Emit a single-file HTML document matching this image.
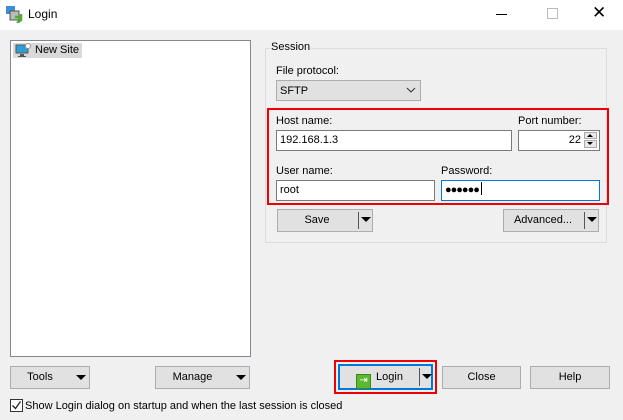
<!DOCTYPE html><html><head><style>
body{margin:0;width:623px;height:420px;background:#f0f0f0;font:11px "Liberation Sans",sans-serif;color:#000;position:relative;overflow:hidden}
.a{position:absolute}
.btn{position:absolute;background:#e1e1e1;border:1px solid #adadad;box-sizing:border-box;text-align:center;line-height:21px}
.inp{position:absolute;background:#fff;border:1px solid #7a7a7a;box-sizing:border-box;line-height:19px;padding-left:3px}
.tri{position:absolute;width:0;height:0;border-left:5px solid transparent;border-right:5px solid transparent;border-top:5px solid #000}
.sep{position:absolute;width:1px;background:#555}
</style></head><body>
<div class="a" style="left:0;top:0;width:623px;height:30px;background:#fff"></div>
<svg class="a" style="left:6px;top:6px" width="17" height="17"><rect x="0" y="0" width="9" height="8" fill="#3a8fd8"/><rect x="4" y="5" width="9" height="9" fill="#bbb" stroke="#555"/><path d="M9 11 l6 0 l0 -3 l0 6 l-4 3" fill="none" stroke="#4caf30" stroke-width="2.5"/></svg>
<div class="a" style="left:28px;top:7px;font-size:12px">Login</div>
<div class="a" style="left:496px;top:14px;width:11px;height:1px;background:#000"></div>
<div class="a" style="left:547px;top:8px;width:9px;height:9px;border:1px solid #bbb"></div>
<div class="a" style="left:592px;top:3px;font-size:17px;color:#000">✕</div>

<div class="a" style="left:10px;top:40px;width:241px;height:317px;background:#fff;border:1px solid #828790;box-sizing:border-box"></div>
<div class="a" style="left:13px;top:43px;width:69px;height:15px;background:#d9d9d9"></div>
<svg class="a" style="left:15px;top:43px" width="16" height="15"><rect x="1" y="2" width="12" height="8" fill="#2a9fd8" stroke="#555"/><rect x="5" y="11" width="4" height="2" fill="#555"/><rect x="3" y="13" width="8" height="1" fill="#555"/><circle cx="13" cy="3" r="2.5" fill="#fff" stroke="#999"/></svg>
<div class="a" style="left:35px;top:44px">New Site</div>

<div class="a" style="left:265px;top:48px;width:342px;height:195px;border:1px solid #dcdcdc;box-sizing:border-box"></div>
<div class="a" style="left:270px;top:41px;background:#f0f0f0;padding:0 1px">Session</div>
<div class="a" style="left:276px;top:65px">File protocol:</div>
<div class="btn" style="left:276px;top:80px;width:145px;height:21px;text-align:left;padding-left:3px;line-height:20px">SFTP</div>
<svg class="a" style="left:406px;top:87px" width="10" height="6"><path d="M1 1l4 4 4-4" fill="none" stroke="#333"/></svg>

<div class="a" style="left:267px;top:108px;width:342px;height:97px;border:2px solid #e00;box-sizing:border-box"></div>
<div class="a" style="left:276px;top:115px">Host name:</div>
<div class="inp" style="left:276px;top:130px;width:236px;height:21px">192.168.1.3</div>
<div class="a" style="left:518px;top:115px">Port number:</div>
<div class="inp" style="left:518px;top:130px;width:82px;height:21px;text-align:right;padding-right:18px">22</div>
<div class="a" style="left:584px;top:132px;width:13px;height:7px;background:#e8e8e8;border:1px solid #aaa;box-sizing:border-box"></div>
<div class="a" style="left:584px;top:140px;width:13px;height:8px;background:#e8e8e8;border:1px solid #aaa;box-sizing:border-box"></div>
<div class="a" style="left:587px;top:134px;border-left:3px solid transparent;border-right:3px solid transparent;border-bottom:3px solid #000"></div>
<div class="a" style="left:587px;top:142px;border-left:3px solid transparent;border-right:3px solid transparent;border-top:3px solid #000"></div>
<div class="a" style="left:276px;top:165px">User name:</div>
<div class="inp" style="left:276px;top:180px;width:159px;height:21px">root</div>
<div class="a" style="left:441px;top:165px">Password:</div>
<div class="inp" style="left:441px;top:180px;width:159px;height:21px;border-color:#0078d7;letter-spacing:-1px">●●●●●●<span style="display:inline-block;width:1px;height:13px;background:#000;vertical-align:-2px;margin-left:2px"></span></div>

<div class="btn" style="left:277px;top:209px;width:96px;height:23px;padding-right:16px">Save</div>
<div class="sep" style="left:358px;top:212px;height:17px"></div>
<div class="tri" style="left:361px;top:217px"></div>
<div class="btn" style="left:503px;top:209px;width:96px;height:23px;padding-right:16px">Advanced...</div>
<div class="sep" style="left:584px;top:212px;height:17px"></div>
<div class="tri" style="left:587px;top:217px"></div>

<div class="btn" style="left:10px;top:366px;width:80px;height:23px;padding-right:20px">Tools</div>
<div class="tri" style="left:76px;top:375px"></div>
<div class="btn" style="left:155px;top:366px;width:95px;height:23px;padding-right:20px">Manage</div>
<div class="tri" style="left:236px;top:375px"></div>

<div class="a" style="left:334px;top:360px;width:103px;height:34px;border:2px solid #e00;box-sizing:border-box"></div>
<div class="btn" style="left:338px;top:364px;width:95px;height:26px;border:2px solid #0078d7;line-height:22px;padding-right:12px"><span style="display:inline-block;width:13px;height:13px;background:#5cb82e;border:1px solid #3a8a1a;vertical-align:-3px;margin-right:5px;color:#fff;font-size:10px;line-height:12px">⇥</span>Login</div>
<div class="sep" style="left:419px;top:368px;height:18px"></div>
<div class="tri" style="left:422px;top:374px"></div>
<div class="btn" style="left:442px;top:366px;width:79px;height:23px">Close</div>
<div class="btn" style="left:530px;top:366px;width:80px;height:23px">Help</div>

<div class="a" style="left:10px;top:399px;width:13px;height:13px;background:#fff;border:1px solid #333;box-sizing:border-box"></div>
<svg class="a" style="left:11px;top:400px" width="11" height="11"><path d="M1.5 5.5l3 3 5-7" fill="none" stroke="#222" stroke-width="1.3"/></svg>
<div class="a" style="left:25px;top:400px">Show Login dialog on startup and when the last session is closed</div>
</body></html>
